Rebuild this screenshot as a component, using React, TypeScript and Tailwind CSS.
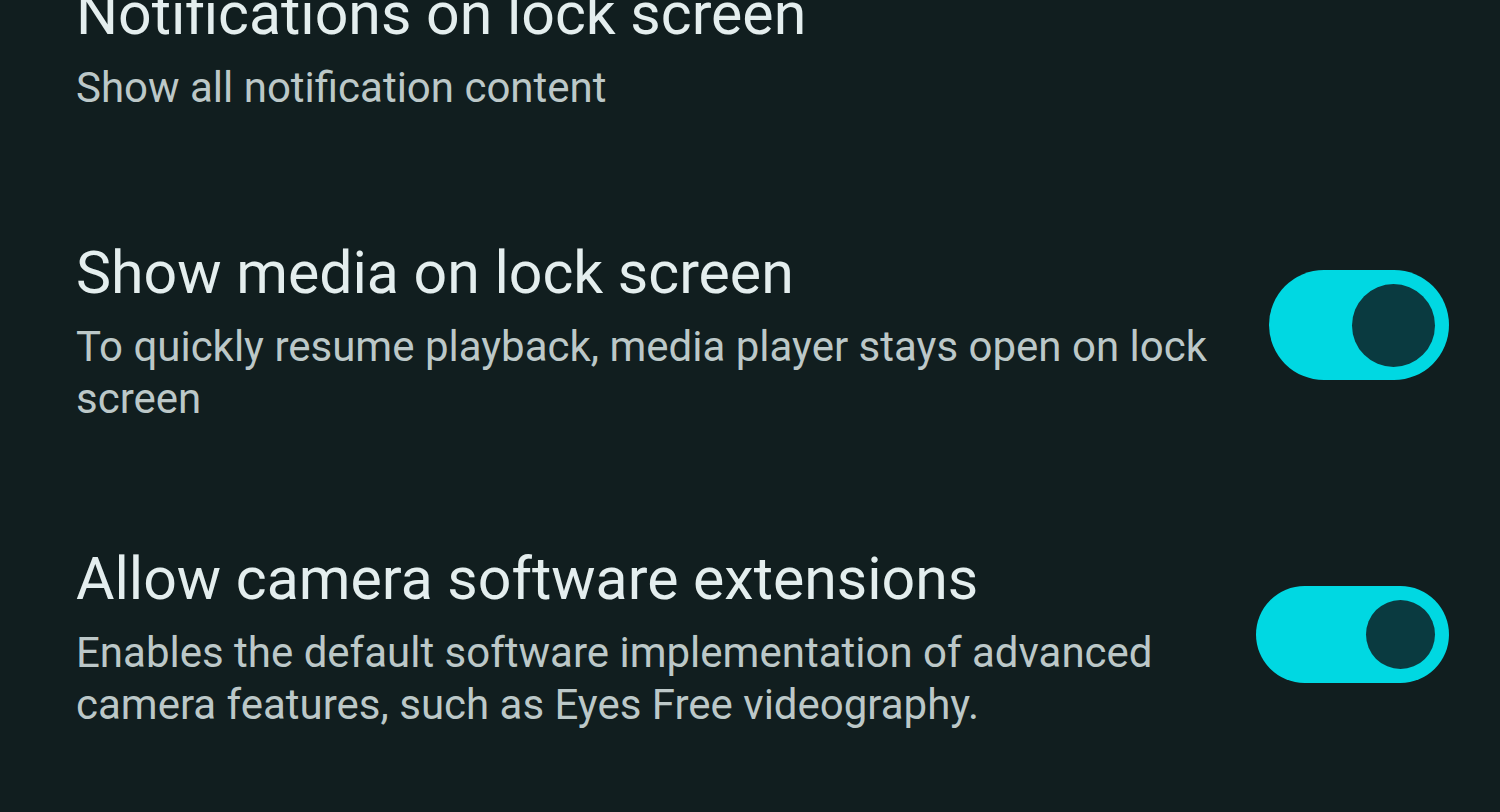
import React from 'react';

type Row = {
  title: string;
  summary: string;
  toggle?: 'large' | 'small';
};

const rows: Row[] = [
  { title: 'Notifications on lock screen', summary: 'Show all notification content' },
  {
    title: 'Show media on lock screen',
    summary: 'To quickly resume playback, media player stays open on lock screen',
    toggle: 'large',
  },
  {
    title: 'Allow camera software extensions',
    summary: 'Enables the default software implementation of advanced camera features, such as Eyes Free videography.',
    toggle: 'small',
  },
];

function Toggle({ size }: { size: 'large' | 'small' }) {
  if (size === 'large') {
    return (
      <div className="flex h-[110px] w-[180px] shrink-0 items-center justify-end rounded-full bg-[#00d8e2] pr-[14px]">
        <div className="h-[83px] w-[83px] rounded-full bg-[#0a3a40]" />
      </div>
    );
  }
  return (
    <div className="mt-[6px] flex h-[97px] w-[193px] shrink-0 items-center justify-end rounded-full bg-[#00d8e2] pr-[14px]">
      <div className="h-[69px] w-[69px] rounded-full bg-[#0a3a40]" />
    </div>
  );
}

export default function App() {
  return (
    <div className="h-[812px] w-[1500px] overflow-hidden bg-[#111e1f] font-['Roboto',sans-serif]">
      <div className="-mt-[87px] flex flex-col">
        {rows.map((row, i) => (
          <div
            key={row.title}
            className={`flex items-center justify-between pl-[76px] pr-[51px] ${i === 0 ? 'pt-[53px] pb-[58px]' : 'py-[53px]'}`}
          >
            <div className="flex max-w-[1160px] flex-col">
              <div className="text-[59px] leading-[96px] text-[#e4eeee]">{row.title}</div>
              <div className="text-[42px] leading-[52px] text-[#bcc8c8]">{row.summary}</div>
            </div>
            {row.toggle && <Toggle size={row.toggle} />}
          </div>
        ))}
      </div>
    </div>
  );
}
